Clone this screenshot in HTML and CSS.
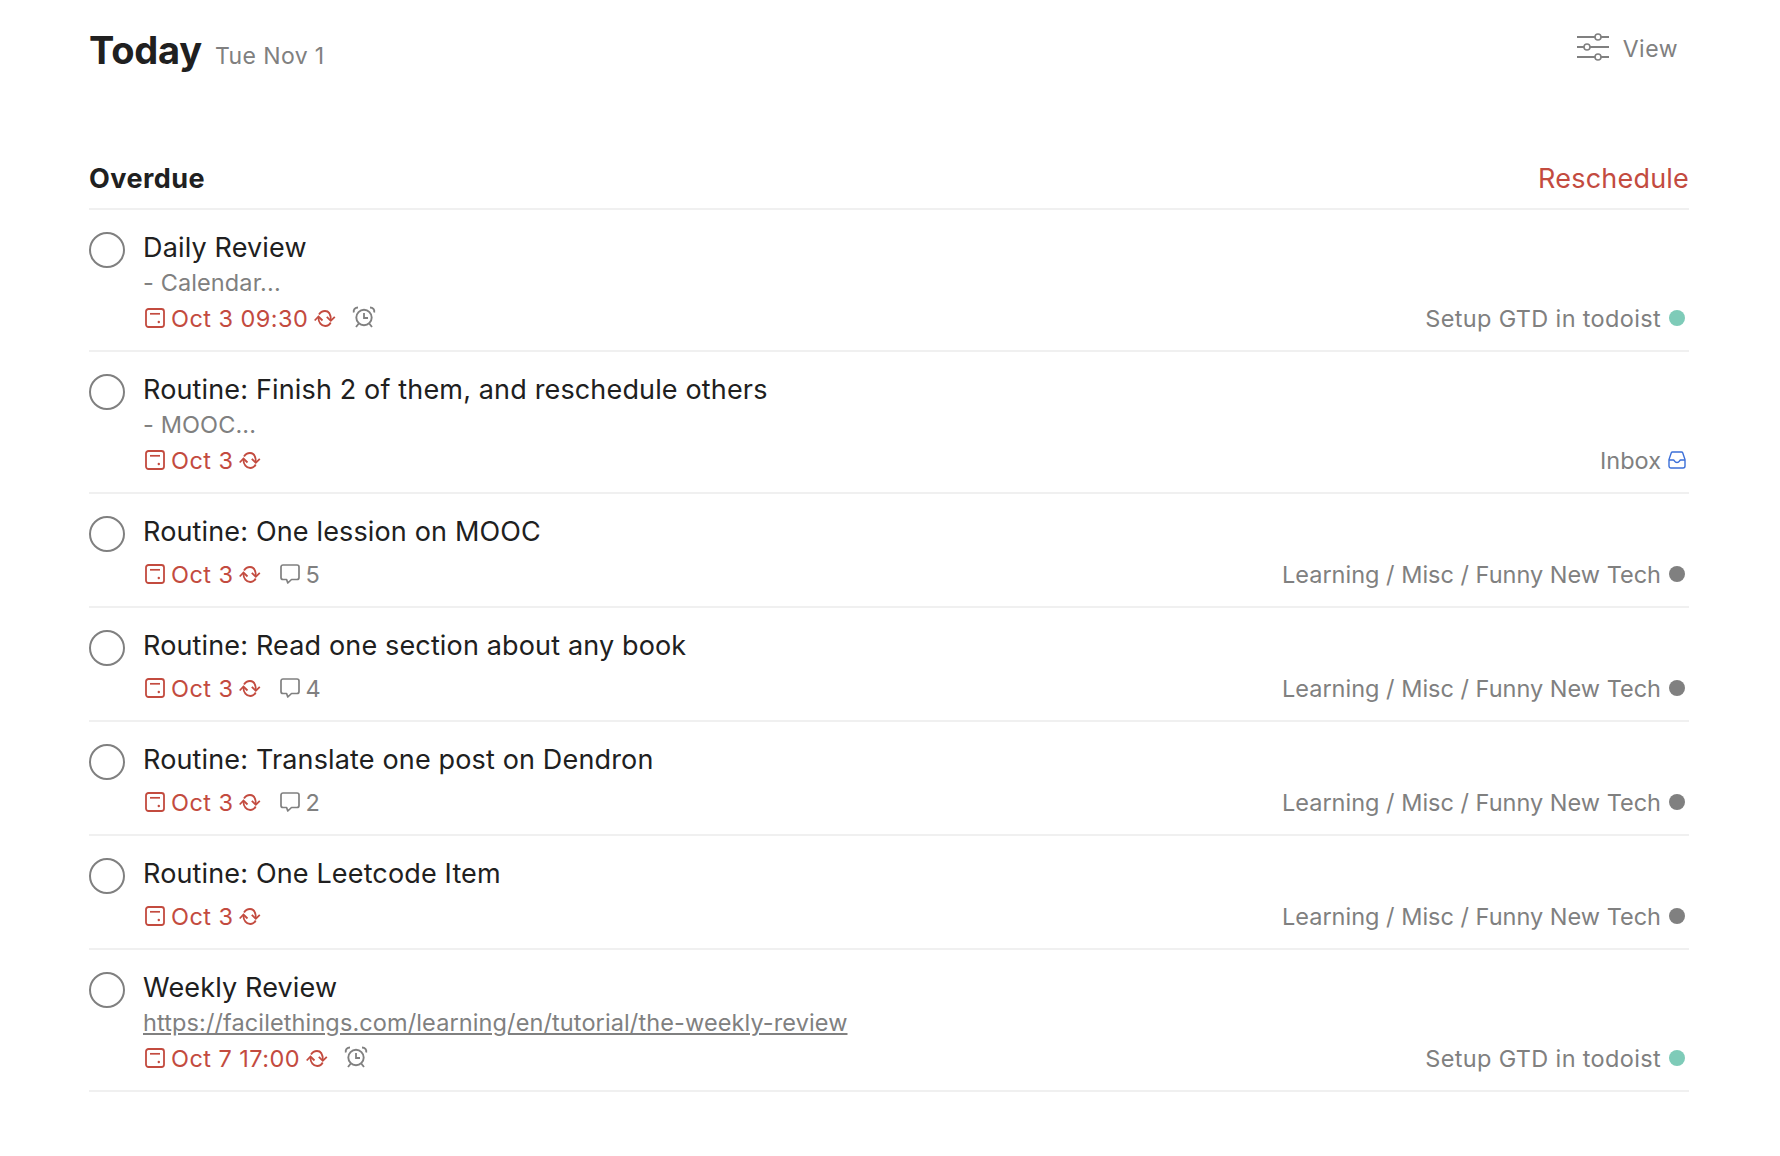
FILE: index.html
```html
<!DOCTYPE html>
<html lang="en">
<head>
<meta charset="utf-8">
<title>Today</title>
<link rel="stylesheet" href="styles.css">
</head>
<body>
<svg class="defs" width="0" height="0" aria-hidden="true">
  <symbol id="cal" viewBox="0 0 20 20"><rect x="1" y="1" width="18" height="18" rx="2.500" fill="none" stroke="currentColor" stroke-width="1.800"/><path d="M5 5.800h10" fill="none" stroke="currentColor" stroke-width="1.700"/><circle cx="13.800" cy="14" r="1.200" fill="currentColor"/></symbol>
  <symbol id="rec" viewBox="0 0 22 17"><path d="M5 4.500C6.500 2 8.800 1 11 1c3.500 0 5.800 3 5.800 9M4.400 7.500c0 5 3 8.500 6.800 8.500 2.300 0 4.300-1 5.500-3.500" fill="none" stroke="currentColor" stroke-width="1.800"/><path d="M.7 10.500l3.800-4 4 4M12.800 6.800l4 4 4-4" fill="none" stroke="currentColor" stroke-width="1.800"/></symbol>
  <symbol id="alarm" viewBox="0 0 24 22"><circle cx="12" cy="11.500" r="7.700" fill="none" stroke="currentColor" stroke-width="1.900"/><path d="M12 7v5h4" fill="none" stroke="currentColor" stroke-width="1.800"/><path d="M1.800 6.500C1.200 3.500 3 1.500 6 1.500M22.200 6.500c.6-3-1.200-5-4.200-5M6.800 17.500 4 21M17.200 17.500 20 21" fill="none" stroke="currentColor" stroke-width="1.900"/></symbol>
  <symbol id="comment" viewBox="0 0 20 20"><path d="M3 1h14a2 2 0 0 1 2 2v10.500a2 2 0 0 1-2 2h-5.500L7.800 19 6.600 15.500H3a2 2 0 0 1-2-2V3a2 2 0 0 1 2-2z" fill="none" stroke="currentColor" stroke-width="1.700" stroke-linejoin="round"/></symbol>
  <symbol id="inbox" viewBox="0 0 18 18"><path d="M4.500 1h9c.6 0 1 .3 1.200.8L17 8.500V15a2 2 0 0 1-2 2H3a2 2 0 0 1-2-2V8.500l2.300-6.700c.2-.5.600-.8 1.200-.8z" fill="none" stroke="currentColor" stroke-width="1.400"/><path d="M1 9h4.500c1 0 .9 2.500 3.500 2.500S11.500 9 12.500 9H17" fill="none" stroke="currentColor" stroke-width="1.400"/></symbol>
</svg>
<main class="page">
  <header class="top">
    <div class="heading"><h1>Today</h1><span class="date">Tue Nov 1</span></div>
    <div class="view">
      <svg class="view-icon" viewBox="0 0 32 28"><path d="M0 4h18M24 4h8M0 14h7M13 14h19M0 24h18M24 24h8" fill="none" stroke="currentColor" stroke-width="1.800"/><circle cx="21" cy="4" r="3" fill="none" stroke="currentColor" stroke-width="1.600"/><circle cx="10" cy="14" r="3" fill="none" stroke="currentColor" stroke-width="1.600"/><circle cx="21" cy="24" r="3" fill="none" stroke="currentColor" stroke-width="1.600"/></svg>
      <span>View</span>
    </div>
  </header>
  <section>
    <div class="section-head"><h2>Overdue</h2><span class="resched">Reschedule</span></div>
    <ul class="tasks">
      <li class="task">
        <span class="check"></span>
        <div class="body">
          <div class="title">Daily Review</div>
          <div class="desc">- Calendar...</div>
          <div class="meta">
            <span class="due"><svg class="ic-cal"><use href="#cal"/></svg>Oct 3 09:30<svg class="ic-rec"><use href="#rec"/></svg></span>
            <svg class="ic-alarm"><use href="#alarm"/></svg>
            <span class="project wide">Setup GTD in todoist<span class="dot green"></span></span>
          </div>
        </div>
      </li>
      <li class="task">
        <span class="check"></span>
        <div class="body">
          <div class="title">Routine: Finish 2 of them, and reschedule others</div>
          <div class="desc">- MOOC...</div>
          <div class="meta">
            <span class="due"><svg class="ic-cal"><use href="#cal"/></svg>Oct 3<svg class="ic-rec"><use href="#rec"/></svg></span>
            <span class="project">Inbox<svg class="ic-inbox"><use href="#inbox"/></svg></span>
          </div>
        </div>
      </li>
      <li class="task">
        <span class="check"></span>
        <div class="body">
          <div class="title tight">Routine: One lession on MOOC</div>
          <div class="meta">
            <span class="due"><svg class="ic-cal"><use href="#cal"/></svg>Oct 3<svg class="ic-rec"><use href="#rec"/></svg></span>
            <span class="comments"><svg class="ic-com"><use href="#comment"/></svg>5</span>
            <span class="project">Learning / Misc / Funny New Tech<span class="dot grey"></span></span>
          </div>
        </div>
      </li>
      <li class="task">
        <span class="check"></span>
        <div class="body">
          <div class="title tight">Routine: Read one section about any book</div>
          <div class="meta">
            <span class="due"><svg class="ic-cal"><use href="#cal"/></svg>Oct 3<svg class="ic-rec"><use href="#rec"/></svg></span>
            <span class="comments"><svg class="ic-com"><use href="#comment"/></svg>4</span>
            <span class="project">Learning / Misc / Funny New Tech<span class="dot grey"></span></span>
          </div>
        </div>
      </li>
      <li class="task">
        <span class="check"></span>
        <div class="body">
          <div class="title tight">Routine: Translate one post on Dendron</div>
          <div class="meta">
            <span class="due"><svg class="ic-cal"><use href="#cal"/></svg>Oct 3<svg class="ic-rec"><use href="#rec"/></svg></span>
            <span class="comments"><svg class="ic-com"><use href="#comment"/></svg>2</span>
            <span class="project">Learning / Misc / Funny New Tech<span class="dot grey"></span></span>
          </div>
        </div>
      </li>
      <li class="task">
        <span class="check"></span>
        <div class="body">
          <div class="title tight">Routine: One Leetcode Item</div>
          <div class="meta">
            <span class="due"><svg class="ic-cal"><use href="#cal"/></svg>Oct 3<svg class="ic-rec"><use href="#rec"/></svg></span>
            <span class="project">Learning / Misc / Funny New Tech<span class="dot grey"></span></span>
          </div>
        </div>
      </li>
      <li class="task">
        <span class="check"></span>
        <div class="body">
          <div class="title">Weekly Review</div>
          <div class="desc"><a href="#">https://facilethings.com/learning/en/tutorial/the-weekly-review</a></div>
          <div class="meta">
            <span class="due"><svg class="ic-cal"><use href="#cal"/></svg>Oct 7 17:00<svg class="ic-rec"><use href="#rec"/></svg></span>
            <svg class="ic-alarm"><use href="#alarm"/></svg>
            <span class="project wide">Setup GTD in todoist<span class="dot green"></span></span>
          </div>
        </div>
      </li>
    </ul>
  </section>
</main>
</body>
</html>
```

FILE: styles.css
```css
* { box-sizing: border-box; }
html, body { margin: 0; padding: 0; background: #fff; }
body { font-family: Inter, "Liberation Sans", sans-serif; color: #202020; }
.defs { position: absolute; }
.page { width: 1780px; height: 1156px; padding: 0 91px 0 89px; }
.top { display: flex; justify-content: space-between; align-items: flex-start; height: 160px; padding-top: 24px; }
.heading { display: flex; align-items: baseline; gap: 13px; }
h1 { margin: 0; font-size: 38px; line-height: 52px; font-weight: 700; letter-spacing: -0.2px; }
.date { font-size: 23px; color: #808080; letter-spacing: 0.4px; }
.view { display: flex; align-items: center; gap: 14px; color: #808080; font-size: 23px; letter-spacing: 0.5px; margin-right: 11px; height: 50px; }
.view-icon { width: 32px; height: 28px; margin-top: -4px; }
.section-head { display: flex; justify-content: space-between; align-items: center; height: 50px; border-bottom: 2px solid #f0f0f0; padding-bottom: 11px; }
h2 { margin: 0; font-size: 27px; line-height: 36px; font-weight: 700; letter-spacing: 0.45px; }
.resched { font-size: 27px; color: #c34b3f; letter-spacing: 0.2px; }
.tasks { list-style: none; margin: 0; padding: 0; }
.task { display: flex; gap: 18px; border-bottom: 2px solid #f0f0f0; padding: 20px 0 0; }
.check { flex: none; width: 36px; height: 36px; margin-top: 2px; border: 2px solid #808080; border-radius: 50%; }
.body { flex: 1; min-width: 0; }
.title { font-size: 27px; letter-spacing: 0.15px; line-height: 36px; height: 35px; }
.desc { font-size: 23.500px; letter-spacing: 0.11px; line-height: 36px; height: 36px; color: #808080; }
.desc a { color: #808080; text-decoration: underline; }
.meta { display: flex; align-items: center; height: 36px; margin-top: -1px; font-size: 23.500px; color: #808080; margin-bottom: 14px; }
.tight { margin-bottom: 8px; }
.due { display: inline-flex; align-items: center; color: #c34b3f; letter-spacing: 0.45px; }
.ic-cal { width: 20px; height: 20px; margin: 0 6px 0 2px; }
.ic-rec { width: 22px; height: 17px; margin-left: 6px; }
.ic-alarm { width: 24px; height: 22px; margin: -3px 0 0 16px; }
.comments { display: inline-flex; align-items: center; margin-left: 19px; }
.ic-com { width: 20px; height: 20px; margin-right: 5px; }
.project { margin-left: auto; display: inline-flex; align-items: center; }
.wide { letter-spacing: 0.34px; }
.dot { width: 16px; height: 16px; border-radius: 50%; margin: 0 4px 0 8px; }
.green { background: #7ecbb8; }
.grey { background: #808080; }
.ic-inbox { width: 18px; height: 18px; margin: 0 3px 0 7px; color: #3b6fd8; }
```
